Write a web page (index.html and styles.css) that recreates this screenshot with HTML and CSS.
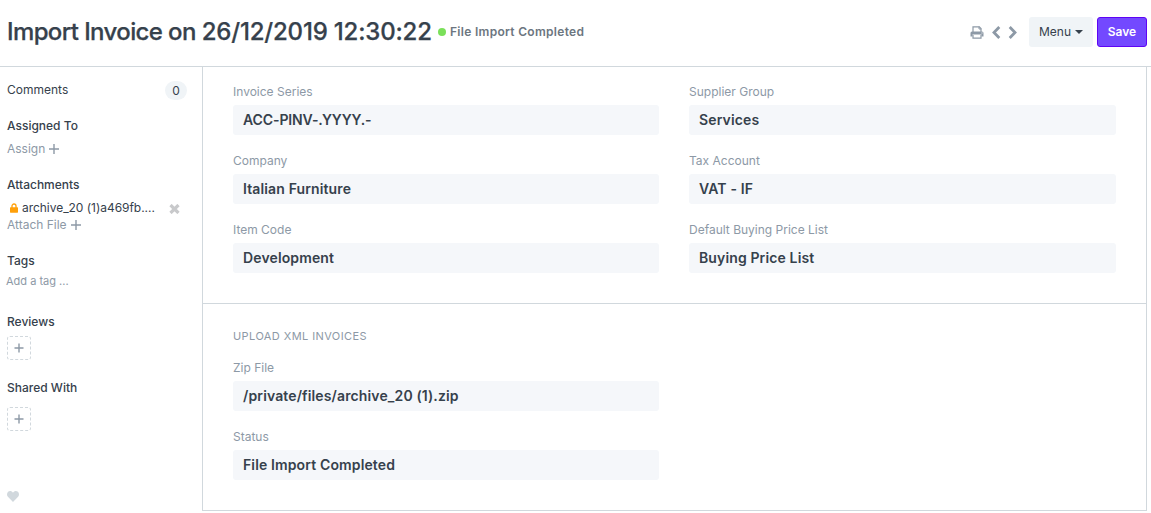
FILE: index.html
```html
<!DOCTYPE html>
<html lang="en">
<head>
<meta charset="utf-8">
<title>Import Invoice</title>
<link rel="stylesheet" href="styles.css">
</head>
<body>
<header class="page-head">
  <h1 class="title">Import Invoice on <span class="date">26/12/2019 12:30:22</span></h1>
  <span class="dot"></span>
  <span class="indicator">File Import Completed</span>
  <div class="actions">
    <svg class="print" width="14" height="13" viewBox="0 0 14 13"><path d="M3 6V.8h6.3L11 2.500V6" fill="none" stroke="#8D99A6" stroke-width="1.2"/><path d="M9 .5v2.500h2.300" fill="none" stroke="#8D99A6"/><path fill="#8D99A6" fill-rule="evenodd" d="M2 5.500h10q1.500 0 1.500 1.500v3.500H11.500V8.500h-9v2H.5V7Q.5 5.500 2 5.500zM11.500 6.500v1h1v-1z"/><path d="M3 9v3.200h8V9" fill="none" stroke="#8D99A6" stroke-width="1.200"/></svg>
    <svg class="chev-left" width="9" height="13" viewBox="0 0 9 13"><path d="M7.300 1L2 6.500l5.300 5.500" fill="none" stroke="#8D99A6" stroke-width="2.800"/></svg>
    <svg class="chev-right" width="9" height="13" viewBox="0 0 9 13"><path d="M1.700 1L7 6.500 1.700 12" fill="none" stroke="#8D99A6" stroke-width="2.800"/></svg>
    <button class="btn btn-menu">Menu<span class="caret"></span></button>
    <button class="btn btn-save">Save</button>
  </div>
</header>
<div class="page-body">
  <aside class="sidebar">
    <div class="row comments"><span>Comments</span><span class="badge">0</span></div>
    <div class="row assigned">Assigned To</div>
    <div class="row muted assign"><span class="t-assign">Assign</span><svg class="plus" width="10" height="10" viewBox="0 0 10 10"><path d="M5 0v10M0 5h10"/></svg></div>
    <div class="row attachments">Attachments</div>
    <div class="row file">
      <svg class="lock" width="8" height="10" viewBox="0 0 8 10"><path d="M2 5V3a2 2 0 0 1 4 0v2" fill="none" stroke="#FFA00A" stroke-width="1.300"/><rect y="4.300" width="8" height="5.400" rx=".6" fill="#FFA00A"/></svg>
      <span class="t-file">archive_20 (1)a469fb....</span>
      <svg class="remove" width="11" height="10" viewBox="0 0 11 10"><path d="M1.500 1l8 8M9.500 1l-8 8" stroke="#C8C9CB" stroke-width="3.200"/></svg>
    </div>
    <div class="row muted attach"><span class="t-attach">Attach File</span><svg class="plus" width="10" height="10" viewBox="0 0 10 10"><path d="M5 0v10M0 5h10"/></svg></div>
    <div class="row tags">Tags</div>
    <div class="row muted add-tag">Add a tag ...</div>
    <div class="row reviews">Reviews</div>
    <button class="add-box review-box"><svg class="plus" width="10" height="10" viewBox="0 0 10 10"><path d="M5 .5v9M.5 5h9"/></svg></button>
    <div class="row shared">Shared With</div>
    <button class="add-box share-box"><svg class="plus" width="10" height="10" viewBox="0 0 10 10"><path d="M5 .5v9M.5 5h9"/></svg></button>
    <svg class="heart" width="12" height="11" viewBox="0 0 12 11"><path fill="#D1D8DD" d="M6 11L.9 5.800C-.4 4.400-.2 1.900 1.100.8 2.500-.4 4.900-.1 6 1.800 7.100-.1 9.500-.4 10.900.8c1.300 1.100 1.500 3.600.2 5z"/></svg>
  </aside>
  <main class="form">
    <section class="section">
      <div class="grid">
        <div class="field"><label>Invoice Series</label><div class="value tight">ACC-PINV-.YYYY.-</div></div>
        <div class="field"><label>Supplier Group</label><div class="value">Services</div></div>
        <div class="field"><label>Company</label><div class="value">Italian Furniture</div></div>
        <div class="field"><label>Tax Account</label><div class="value">VAT - IF</div></div>
        <div class="field"><label>Item Code</label><div class="value">Development</div></div>
        <div class="field"><label>Default Buying Price List</label><div class="value">Buying Price List</div></div>
      </div>
    </section>
    <section class="section upload">
      <h2 class="section-title">UPLOAD XML INVOICES</h2>
      <div class="grid single">
        <div class="field"><label>Zip File</label><div class="value">/private/files/archive_20 (1).zip</div></div>
        <div class="field"><label>Status</label><div class="value">File Import Completed</div></div>
      </div>
    </section>
  </main>
</div>
</body>
</html>
```
FILE: styles.css
```css
* { box-sizing: border-box; }
body { margin: 0; height: 513px; overflow: hidden; background: #fff; color: #36414C; font: 12px/18px Inter, "Open Sans", sans-serif; }
svg { display: block; flex: none; }
button { font: inherit; color: inherit; padding: 0; }
.page-head { height: 67px; padding: 1px 4px 3px 7px; display: flex; align-items: center; border-bottom: 1px solid #D1D8DD; white-space: nowrap; }
.title { margin: 0; width: 425px; font-size: 24px; line-height: 30px; font-weight: 500; letter-spacing: -.61px; -webkit-text-stroke: .25px #36414C; }
.date { letter-spacing: -.18px; }
.dot { width: 8px; height: 8px; margin: 0 4px 0 6px; border-radius: 50%; background: #7BE05A; }
.indicator { color: #6C7680; font-weight: 600; letter-spacing: .3px; }
.actions { margin-left: auto; display: flex; align-items: center; }
.print { margin-right: 8px; }
.chev-left { margin-right: 7px; }
.chev-right { margin-right: 12px; }
.btn { height: 30px; border: 0; border-radius: 3px; display: flex; align-items: center; justify-content: center; }
.btn-menu { width: 64px; margin-right: 4px; background: #F0F4F7; }
.caret { margin-left: 4px; border: 4px solid transparent; border-top-color: #36414C; border-bottom: 0; }
.btn-save { width: 50px; color: #fff; font-weight: 600; background: #7349FF; border: 1px solid #5E04F5; }
.page-body { display: flex; height: 444px; }
.sidebar { width: 202px; padding: 14px 15px 0 7px; display: flex; flex-direction: column; }
.row { height: 18px; display: flex; align-items: center; flex: none; white-space: nowrap; }
.comments { justify-content: space-between; }
.badge { width: 22px; height: 19px; line-height: 19px; border-radius: 10px; text-align: center; background: #F0F4F7; }
.assigned, .attachments, .tags, .reviews, .shared { font-weight: 500; }
.muted { color: #8D99A6; }
.plus { fill: none; stroke: #8D99A6; stroke-width: 1.4; }
.muted .plus { margin-left: 4px; }
.assigned { margin-top: 18px; }
.assign { margin-top: 5px; }
.attachments { margin-top: 18px; }
.file { margin-top: 5px; padding-left: 3px; }
.lock { margin-right: 4px; }
.t-file { letter-spacing: -.04px; }
.remove { margin: 2px 7px 0 auto; }
.attach { margin-top: -1px; }
.tags { margin-top: 18px; }
.add-tag { margin: 2px 0 0 -1px; font-size: 11px; }
.reviews { margin-top: 23px; }
.add-box { width: 24px; height: 24px; flex: none; border: 1px dashed #D1D8DD; border-radius: 3px; background: #fff; display: flex; align-items: center; justify-content: center; }
.review-box { margin-top: 5px; }
.shared { margin-top: 19px; }
.share-box { margin-top: 10px; }
.heart { margin: auto 0 9px; }
.form { width: 945px; border: 1px solid #D1D8DD; border-top: 0; }
.section { padding: 16px 30px 30px; }
.upload { border-top: 1px solid #D1D8DD; padding-top: 23px; }
.section-title { margin: 0 0 14px; font-size: 11px; line-height: 18px; font-weight: 400; letter-spacing: .42px; color: #8D99A6; }
.grid { display: grid; grid-template-columns: 426px 427px; gap: 17px 30px; }
.single > * { grid-column: 1; }
.field label { display: block; height: 22px; color: #8D99A6; }
.value { height: 30px; padding: 0 10px; line-height: 30px; border-radius: 3px; background: #F5F7FA; font-size: 14px; font-weight: 600; letter-spacing: .13px; }
.tight { letter-spacing: -.1px; }
```
